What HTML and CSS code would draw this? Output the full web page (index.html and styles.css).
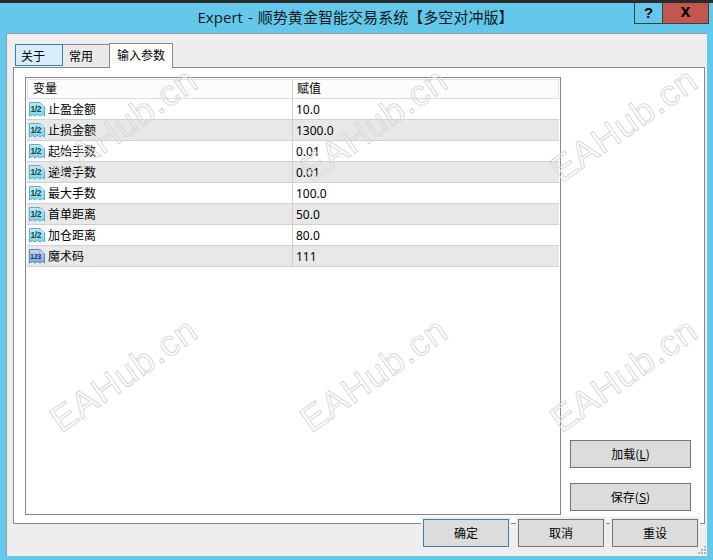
FILE: index.html
```html
<!DOCTYPE html>
<html lang="zh">
<head>
<meta charset="utf-8">
<title>Expert</title>
<link rel="stylesheet" href="styles.css">
</head>
<body>
<svg class="defs" width="0" height="0" aria-hidden="true">
  <defs>
    <linearGradient id="pageA" x1="0" y1="0" x2="0" y2="1"><stop offset="0" stop-color="#bfecf4"/><stop offset="1" stop-color="#7fd2e3"/></linearGradient>
    <linearGradient id="pageB" x1="0" y1="0" x2="0" y2="1"><stop offset="0" stop-color="#c6daf4"/><stop offset="1" stop-color="#7fa6dc"/></linearGradient>
  </defs>
</svg>
<div class="window">
  <header class="titlebar">
    <div class="title">Expert - 顺势黄金智能交易系统【多空对冲版】</div>
    <div class="caption">
      <span class="cap help">?</span>
      <span class="cap close">x</span>
    </div>
  </header>
  <main class="client">
    <nav class="tabs">
      <span class="tab hover">关于</span>
      <span class="tab plain">常用</span>
      <span class="tab active">输入参数</span>
    </nav>
    <section class="page">
      <div class="list">
        <div class="row head">
          <div class="name">变量</div>
          <div class="value">赋值</div>
        </div>
        <div class="row"><div class="name"><svg class="ico" viewBox="0 0 16 16"><use href="#i12"/></svg>止盈金额</div><div class="value">10.0</div></div>
        <div class="row alt"><div class="name"><svg class="ico" viewBox="0 0 16 16"><use href="#i12"/></svg>止损金额</div><div class="value">1300.0</div></div>
        <div class="row"><div class="name"><svg class="ico" viewBox="0 0 16 16"><use href="#i12"/></svg>起始手数</div><div class="value">0.01</div></div>
        <div class="row alt"><div class="name"><svg class="ico" viewBox="0 0 16 16"><use href="#i12"/></svg>递增手数</div><div class="value">0.01</div></div>
        <div class="row"><div class="name"><svg class="ico" viewBox="0 0 16 16"><use href="#i12"/></svg>最大手数</div><div class="value">100.0</div></div>
        <div class="row alt"><div class="name"><svg class="ico" viewBox="0 0 16 16"><use href="#i12"/></svg>首单距离</div><div class="value">50.0</div></div>
        <div class="row"><div class="name"><svg class="ico" viewBox="0 0 16 16"><use href="#i12"/></svg>加仓距离</div><div class="value">80.0</div></div>
        <div class="row alt"><div class="name"><svg class="ico" viewBox="0 0 16 16"><use href="#i123"/></svg>魔术码</div><div class="value">111</div></div>
      </div>
      <aside class="side">
        <button class="btn side-btn">加载(<u>L</u>)</button>
        <button class="btn side-btn">保存(<u>S</u>)</button>
      </aside>
    </section>
    <footer class="actions">
      <button class="btn act default">确定</button>
      <button class="btn act">取消</button>
      <button class="btn act">重设</button>
    </footer>
    <svg class="grip" width="9" height="9" viewBox="0 0 9 9"><path fill="#b4b4b4" d="M7 0h2v2H7zM4 3h2v2H4zM7 3h2v2H7zM1 6h2v2H1zM4 6h2v2H4zM7 6h2v2H7z"/></svg>
  </main>
  <div class="marks" aria-hidden="true">
    <span class="mark m1">EAHub.cn</span>
    <span class="mark m2">EAHub.cn</span>
    <span class="mark m3">EAHub.cn</span>
    <span class="mark m4">EAHub.cn</span>
    <span class="mark m5">EAHub.cn</span>
    <span class="mark m6">EAHub.cn</span>
  </div>
</div>
<svg class="defs" width="0" height="0" aria-hidden="true">
  <defs>
    <symbol id="i12" viewBox="0 0 16 16">
      <path d="M.5 1.500h10.500l4.500 4.500v9l-2-1.500-2.500 1.500-2.500-1.500-2.500 1.500-2.500-1.500-3 1.500z" fill="url(#pageA)" stroke="#58b2cb"/>
      <path d="M11 1.500v4.500h4.500z" fill="#e6f9fc" stroke="#8acfe0"/>
      <text x="1.600" y="10.500" class="ico-text">1/2</text>
    </symbol>
    <symbol id="i123" viewBox="0 0 16 16">
      <path d="M.5 1.500h10.500l4.500 4.500v9l-2-1.500-2.500 1.500-2.500-1.500-2.500 1.500-2.500-1.500-3 1.500z" fill="url(#pageB)" stroke="#5a82c2"/>
      <path d="M11 1.500v4.500h4.500z" fill="#e6effa" stroke="#8aa8d8"/>
      <text x="1.300" y="11" class="ico-text num">123</text>
    </symbol>
  </defs>
</svg>
</body>
</html>
```
FILE: styles.css
```css
* { box-sizing: border-box; }
html, body { margin: 0; padding: 0; }
body { width: 713px; height: 560px; overflow: hidden; background: #63c8ea; font-family: "Noto Sans CJK SC", "Noto Sans", sans-serif; font-size: 12px; color: #000; }
.defs { position: absolute; }
.window { position: relative; width: 713px; height: 560px; border-top: 3px solid #2b2b2b; display: flex; flex-direction: column; }
.titlebar { height: 29px; flex: none; display: flex; justify-content: center; padding-right: 2px; }
.title { font-size: 15px; line-height: 28px; color: #0b1a22; font-family: "Open Sans", "Noto Sans CJK SC", sans-serif; word-spacing: 1px; letter-spacing: .05px; }
.caption { position: absolute; top: 0; right: 4px; display: flex; height: 21px; border: 1px solid #3a3f42; border-top: 0; }
.cap { display: flex; align-items: center; justify-content: center; font-family: "Liberation Sans", sans-serif; font-weight: 700; font-size: 15px; line-height: 1; padding-bottom: 2px; }
.help { width: 28px; border-right: 1px solid #3a3f42; }
.close { width: 45px; background: #c1574f; font-size: 18px; padding-bottom: 4px; }
.client { position: relative; margin: 1px 6px 0; height: 523px; width: 701px; background: #eeeeee; border-top: 1px solid #8f9aa3; border-left: 1px solid #8f9aa3; padding: 9px 2px 0 6px; }
.tabs { display: flex; height: 24px; padding-left: 2px; position: relative; z-index: 1; align-items: flex-end; }
.tab { display: flex; align-items: center; border: 1px solid #85888f; border-bottom: 0; height: 22px; margin-bottom: 1px; padding-left: 5px; }
.hover { width: 48px; background: #d7edfb; border-color: #3c7fb1; border-bottom: 1px solid #3c7fb1; }
.plain { width: 47px; background: #e9e9e9; border-left: 0; padding-left: 6px; }
.active { width: 64px; height: 25px; margin: 0 0 -1px -1px; background: #fff; padding: 0 0 3px 7px; }
.page { display: flex; height: 457px; background: #fff; border: 1px solid #85888f; padding: 9px 13px 8px 11px; }
.list { width: 536px; height: 438px; border: 1px solid #85888f; flex: none; padding: 1px; }
.row { display: flex; height: 21px; border-bottom: 1px solid #d0d0d0; line-height: 20px; }
.row.alt { background: #e8e8e8; }
.row.head { height: 20px; background: #fcfcfc; border: 1px solid #e4e4e4; border-bottom: 1px solid #dcdcdc; line-height: 16px; }
.name { width: 266px; display: flex; align-items: center; border-right: 1px solid #d0d0d0; padding-left: 2px; flex: none; }
.head .name { padding: 0 0 2px 5px; width: 265px; }
.value { padding-left: 3px; font-family: "Noto Sans", sans-serif; line-height: 22px; }
.head .value { font-family: inherit; padding-left: 4px; line-height: 16px; }
.ico { width: 16px; height: 16px; margin-right: 3px; flex: none; }
.ico-text { font: 700 8.500px "Liberation Sans", sans-serif; fill: #12465a; letter-spacing: -.5px; }
.ico-text.num { font-size: 6.500px; letter-spacing: 0; fill: #10305e; }
.side { flex: 1; display: flex; flex-direction: column; justify-content: flex-end; align-items: flex-end; gap: 15px; padding-bottom: 4px; }
.btn { background: #dcdcdc; border: 1px solid #757575; font: 12px "Noto Sans CJK SC", "Noto Sans", sans-serif; color: #000; padding: 0 0 2px; }
.side-btn { width: 121px; height: 28px; }
.actions { position: absolute; top: 485px; left: 416px; display: flex; gap: 8px; }
.act { width: 86px; height: 28px; box-shadow: 0 0 0 2px #eeeeee; padding-bottom: 1px; }
.default { border-color: #3c7fb1; margin-right: 1px; }
.grip { position: absolute; right: 1px; bottom: 1px; }
.marks { position: absolute; inset: -3px 0 0 0; pointer-events: none; }
.mark { position: absolute; font: 400 36px "Liberation Sans", sans-serif; color: transparent; -webkit-text-stroke: 1px #d9d9d9; transform: translate(-50%, -50%) rotate(-35deg); white-space: nowrap; letter-spacing: 1px; }
.m1 { left: 124px; top: 125px; }
.m2 { left: 374px; top: 125px; }
.m3 { left: 624px; top: 125px; }
.m4 { left: 124px; top: 375px; }
.m5 { left: 374px; top: 375px; }
.m6 { left: 624px; top: 375px; }
```
